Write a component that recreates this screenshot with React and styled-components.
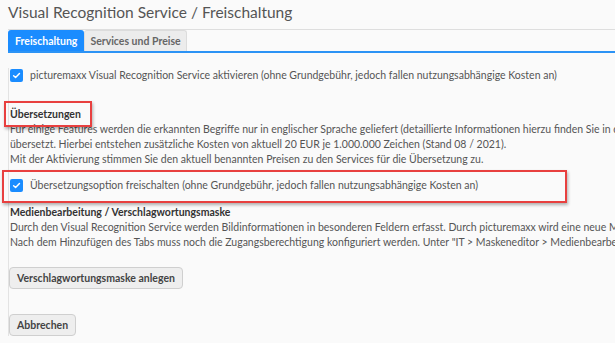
import React from "react";
import styled, { createGlobalStyle } from "styled-components";

const Global = createGlobalStyle`
  html, body { margin: 0; padding: 0; background: #fafafa; overflow: hidden; }
  body { font-family: Lato, "Open Sans", sans-serif; color: #555; }
`;

const Page = styled.div`
  width: 615px;
  height: 343px;
  overflow: hidden;
  padding-left: 8px;
  box-sizing: border-box;
`;

const Title = styled.h1`
  margin: 0;
  padding-top: 1px;
  font-size: 15.5px;
  line-height: 22px;
  font-weight: 400;
  color: #555;
  white-space: nowrap;
`;

const TabBar = styled.div`
  margin-top: 6px;
  display: flex;
  height: 24px;
  box-sizing: border-box;
  border-top: 1px solid #dedede;
  border-bottom: 2px solid #2c93f5;
  margin-right: -10px;
`;

const Tab = styled.div`
  display: flex;
  align-items: center;
  padding: 0 ${(p) => (p.$active ? 7 : 5)}px;
  font-size: 10.5px;
  font-weight: 700;
  border-radius: 3px 3px 0 0;
  background: ${(p) => (p.$active ? "#1a8cff" : "#ececec")};
  color: ${(p) => (p.$active ? "#fff" : "#666")};
  border: ${(p) => (p.$active ? "none" : "1px solid #dcdcdc")};
  border-bottom: none;
`;

const Panel = styled.div`
  border-left: 1px solid #e3e3e3;
  padding-left: 1px;
  font-size: 10.5px;
  line-height: 15px;
  white-space: nowrap;
`;

const CheckRow = styled.label`
  display: flex;
  align-items: center;
  gap: 7px;
  height: 15px;
  margin-top: ${(p) => p.$mt}px;
  color: #555;
`;

const Box = styled.span`
  width: 13px;
  height: 13px;
  border-radius: 2px;
  background: #1a8cff;
  display: inline-flex;
  align-items: center;
  justify-content: center;
  flex: none;
`;

const Highlight = styled.div`
  position: relative;
  margin-top: ${(p) => p.$mt}px;
  &::after {
    content: "";
    position: absolute;
    left: ${(p) => p.$l}px;
    top: ${(p) => p.$t}px;
    width: ${(p) => p.$w}px;
    height: ${(p) => p.$h}px;
    border: 2px solid #e8403f;
    box-shadow: 1px 2px 3px rgba(0, 0, 0, 0.3);
    pointer-events: none;
  }
`;

const Heading = styled.div`
  font-weight: 700;
  color: #333;
  margin-top: ${(p) => p.$mt || 0}px;
`;

const Para = styled.p`
  margin: 0;
  color: #555;
`;

const Button = styled.button`
  display: block;
  font-family: inherit;
  font-size: 10.5px;
  font-weight: 700;
  color: #444;
  height: 22px;
  padding: 0 7px;
  background: #eeeeee;
  border: 1px solid #cfcfcf;
  border-radius: 4px;
  margin-top: ${(p) => p.$mt}px;
  margin-left: -1px;
`;

const Check = () => (
  <Box>
    <svg width="9" height="9" viewBox="0 0 10 10">
      <path d="M1.8 5.2 L4 7.3 L8.3 2.7" fill="none" stroke="#fff" strokeWidth="1.6" strokeLinecap="round" strokeLinejoin="round" />
    </svg>
  </Box>
);

export default function App() {
  return (
    <Page>
      <Global />
      <Title>Visual Recognition Service / Freischaltung</Title>
      <TabBar>
        <Tab $active>Freischaltung</Tab>
        <Tab>Services und Preise</Tab>
      </TabBar>
      <Panel>
        <CheckRow $mt={15}>
          <Check />
          picturemaxx Visual Recognition Service aktivieren (ohne Grundgebühr, jedoch fallen nutzungsabhängige Kosten an)
        </CheckRow>
        <Highlight $mt={24} $l={-6} $t={-6} $w={84} $h={22}>
          <Heading>Übersetzungen</Heading>
        </Highlight>
        <Para>
          Für einige Features werden die erkannten Begriffe nur in englischer Sprache geliefert (detaillierte Informationen hierzu finden Sie in der
          <br />
          übersetzt. Hierbei entstehen zusätzliche Kosten von aktuell 20 EUR je 1.000.000 Zeichen (Stand 08 / 2021).
          <br />
          Mit der Aktivierung stimmen Sie den aktuell benannten Preisen zu den Services für die Übersetzung zu.
        </Para>
        <Highlight $mt={11} $l={-8} $t={-8} $w={561} $h={29}>
          <CheckRow $mt={0}>
            <Check />
            Übersetzungsoption freischalten (ohne Grundgebühr, jedoch fallen nutzungsabhängige Kosten an)
          </CheckRow>
        </Highlight>
        <Heading $mt={12}>Medienbearbeitung / Verschlagwortungsmaske</Heading>
        <Para>
          Durch den Visual Recognition Service werden Bildinformationen in besonderen Feldern erfasst. Durch picturemaxx wird eine neue Maske
          <br />
          Nach dem Hinzufügen des Tabs muss noch die Zugangsberechtigung konfiguriert werden. Unter "IT &gt; Maskeneditor &gt; Medienbearbeitung
        </Para>
        <Button $mt={17}>Verschlagwortungsmaske anlegen</Button>
        <Button $mt={25}>Abbrechen</Button>
      </Panel>
    </Page>
  );
}
